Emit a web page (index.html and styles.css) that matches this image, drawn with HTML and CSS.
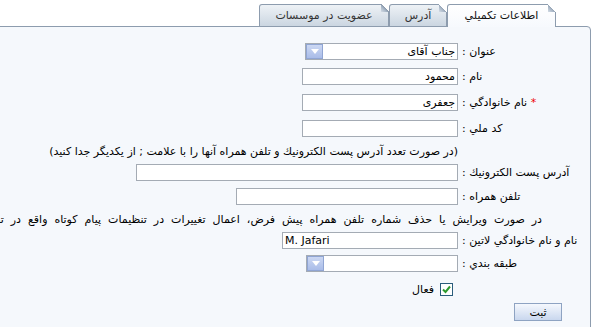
FILE: index.html
```html
<!DOCTYPE html>
<html>
<head>
    <meta charset="utf-8" />
    <title>اطلاعات تكميلي</title>
    <link rel="stylesheet" href="styles.css">
</head>
<body>
    <div class="page">
        <div class="tabs">
            <div class="tab active">اطلاعات تكميلي</div>
            <div class="tab tab-address">آدرس</div>
            <div class="tab tab-member">عضويت در موسسات</div>
        </div>
        <div class="panel">
            <div class="form">
                <label>عنوان :</label>
                <div class="combo w-title">
                    <span class="combo-text">جناب آقاى</span>
                    <span class="combo-btn"></span>
                </div>

                <label>نام :</label>
                <input type="text" class="w-short" value="محمود">

                <label><span class="req">*</span> نام خانوادگي :</label>
                <input type="text" class="w-short" value="جعفری">

                <label>كد ملي :</label>
                <input type="text" class="w-short" value="">

                <div class="note">(در صورت تعدد آدرس پست الكترونيك و تلفن همراه آنها را با علامت ; از يكديگر جدا كنيد)</div>

                <label>آدرس پست الكترونيك :</label>
                <input type="text" class="w-email" value="">

                <label>تلفن همراه :</label>
                <input type="text" class="w-phone" value="">

                <div class="warn">در صورت ويرايش يا حذف شماره تلفن همراه پيش فرض، اعمال تغييرات در تنظيمات پيام كوتاه واقع در تنظيمات كاربر نيز ضروري است</div>

                <label>نام و نام خانوادگي لاتين :</label>
                <input type="text" class="w-latin ltr" value="M. Jafari">

                <label>طبقه بندي :</label>
                <div class="combo w-class">
                    <span class="combo-text"></span>
                    <span class="combo-btn"></span>
                </div>

                <div class="check-row">
                    <span class="check">
                        <svg width="9" height="9" viewBox="0 0 9 9"><path d="M1 4.5 L3.5 7 L8 1.5" fill="none" stroke="#2e9a2e" stroke-width="2"/></svg>
                    </span>
                    <span>فعال</span>
                </div>

                <button class="save">ثبت</button>
            </div>
        </div>
    </div>
</body>
</html>
```

FILE: styles.css
```css
body {
    margin: 0;
    background: #fff;
    font-family: "DejaVu Sans", sans-serif;
    font-size: 11px;
    color: #000;
    overflow: hidden;
}
.page {
    direction: rtl;
    margin-right: 25px;
}

/* tabs */
.tabs {
    display: flex;
    padding-top: 4px;
    margin-right: 35px;
    position: relative;
    z-index: 1;
}
.tab {
    position: relative;
    box-sizing: border-box;
    height: 22px;
    line-height: 21px;
    text-align: center;
    border: 1px solid #8d9cae;
    border-bottom: none;
    border-top-left-radius: 3px;
    background: linear-gradient(#eef2f6, #cbd6e1);
    color: #333;
}
.tab::after {
    content: "";
    position: absolute;
    top: -1px;
    right: -1px;
    width: 8px;
    height: 8px;
    background: linear-gradient(to bottom left, #fff 50%, #8d9cae 50%, #aab8c8 65%, #d5dde6);
}
.tab.active {
    width: 109px;
    height: 23px;
    margin-bottom: -1px;
    background: linear-gradient(#fff, #f6f9fd);
    color: #111;
}
.tab-address { width: 58px; }
.tab-member { width: 130px; }

/* panel */
.panel {
    width: 620px;
    height: 400px;
    border: 1px solid #8d9cae;
    border-top-right-radius: 4px;
    background: #f5f8fc;
    padding: 11px 12px 0 0;
}

.form {
    display: grid;
    grid-template-columns: 116px auto;
    grid-template-rows: 26px 25px 26px 26px 20px 23px 24px 22px 21px 25px 26px 20px;
    column-gap: 4px;
    align-items: center;
    justify-content: start;
}
.form label {
    text-align: left;
    white-space: nowrap;
}
.req {
    color: #e00;
}

input[type=text] {
    box-sizing: border-box;
    height: 17px;
    margin: 0;
    padding: 0 2px;
    border: 1px solid #a4abb4;
    background: #fff;
    font-family: "DejaVu Sans", sans-serif;
    font-size: 11px;
    color: #000;
    justify-self: start;
}
input.ltr {
    direction: ltr;
}
.w-short { width: 156px; }
.w-email { width: 322px; }
.w-phone { width: 222px; }
.w-latin { width: 176px; }

.combo {
    box-sizing: border-box;
    display: flex;
    align-items: center;
    height: 17px;
    border: 1px solid #a4abb4;
    background: #fff;
    justify-self: start;
}
.w-title { width: 153px; }
.w-class { width: 152px; }
.combo-text {
    flex: 1;
    padding-right: 2px;
}
.combo-btn {
    position: relative;
    width: 17px;
    height: 15px;
    box-sizing: border-box;
    border: 1px solid #90a5d3;
    background: linear-gradient(#ccd8f3, #a9bce8);
}
.combo-btn::after {
    content: "";
    position: absolute;
    left: 4px;
    top: 4px;
    border-left: 4px solid transparent;
    border-right: 4px solid transparent;
    border-top: 5px solid #fff;
}

.note {
    grid-column: 2;
    white-space: nowrap;
}
.warn {
    grid-column: 1 / -1;
    white-space: nowrap;
    padding-right: 36px;
    word-spacing: 3.5px;
}

.check-row {
    grid-column: 2;
    display: flex;
    align-items: center;
    gap: 6px;
    padding-right: 5px;
}
.check {
    box-sizing: border-box;
    width: 13px;
    height: 13px;
    border: 1px solid #2a5d7c;
    background: #fff;
    display: flex;
    align-items: center;
    justify-content: center;
}

.save {
    grid-column: 1;
    justify-self: start;
    margin-right: 16px;
    width: 48px;
    height: 18px;
    padding: 0;
    border: 1px solid #8ea3c2;
    background: linear-gradient(#f5f8fd, #c9d7ee);
    font-family: "DejaVu Sans", sans-serif;
    font-size: 11px;
    color: #000;
}
```
